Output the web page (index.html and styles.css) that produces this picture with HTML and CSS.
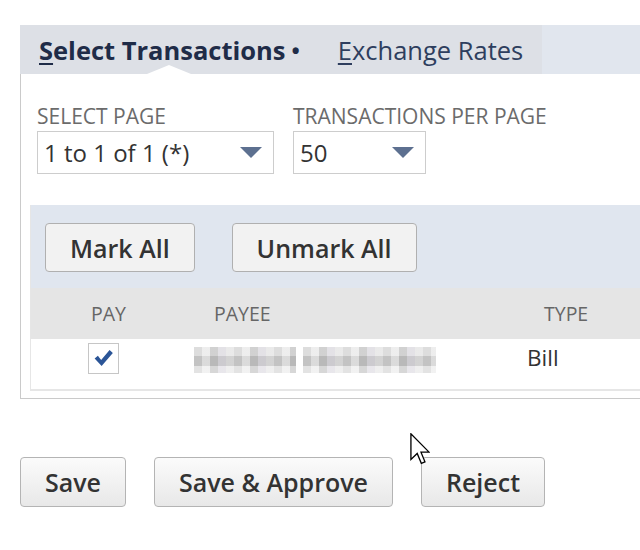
FILE: index.html
```html
<!DOCTYPE html>
<html>
<head>
<meta charset="utf-8">
<link rel="stylesheet" href="styles.css">
</head>
<body>
<div class="page">
  <div class="tabbar">
    <div class="tabs">
      <div class="tab active"><u>S</u>elect Transactions<span class="dot">•</span></div>
      <div class="tab"><u>E</u>xchange Rates</div>
    </div>
  </div>
  <div class="panel">
    <div class="fields">
      <div class="field f1">
        <div class="label">SELECT PAGE</div>
        <div class="select"><span class="value">1 to 1 of 1 (*)</span><span class="arrow"></span></div>
      </div>
      <div class="field f2">
        <div class="label">TRANSACTIONS PER PAGE</div>
        <div class="select"><span class="value">50</span><span class="arrow"></span></div>
      </div>
    </div>
    <div class="list">
      <div class="toolbar">
        <button class="btn">Mark All</button>
        <button class="btn">Unmark All</button>
      </div>
      <div class="grid head">
        <div class="c-pay">PAY</div>
        <div class="c-payee">PAYEE</div>
        <div class="c-type">TYPE</div>
      </div>
      <div class="grid row">
        <div class="c-pay">
          <span class="checkbox">
            <svg viewBox="0 0 31 31" width="29" height="29"><path d="M6 15.5 L9.5 12.5 L13 17 L22 6.5 L25.5 9.5 L13.5 23.5 Z" fill="#2b5597"/></svg>
          </span>
        </div>
        <div class="c-payee-d"><span class="blur w1"></span><span class="blur w2"></span></div>
        <div class="c-type-d">Bill</div>
      </div>
    </div>
  </div>
  <div class="actions">
    <button class="btn big">Save</button>
    <button class="btn big">Save &amp; Approve</button>
    <button class="btn big">Reject</button>
  </div>
  <svg class="cursor" viewBox="0 0 12 20" width="20" height="33"><path d="M0.5 0.5 L0.5 16 L4.3 12.4 L6.8 18.4 L9 17.5 L6.6 11.6 L11.5 11.6 Z" fill="#fff" stroke="#000" stroke-width="0.8" stroke-linejoin="miter"/></svg>
</div>
</body>
</html>
```
FILE: styles.css
```css
html, body {
  margin: 0;
  padding: 0;
  overflow: hidden;
  background: #fff;
}
body {
  font-family: "Open Sans", "Liberation Sans", sans-serif;
  color: #333;
}
.page {
  position: relative;
  width: 640px;
  height: 550px;
  overflow: hidden;
}
.tabbar {
  margin: 25px 0 0 20px;
  height: 49px;
  background: #e1e6ee;
  display: flex;
}
.tabs {
  display: flex;
  background: #dde0e6;
  height: 49px;
}
.tab {
  position: relative;
  padding: 0 19px;
  display: flex;
  align-items: center;
  font-size: 25.5px;
  color: #2e3e5e;
  white-space: nowrap;
}
.tab u {
  text-decoration-thickness: 2px;
  text-underline-offset: 3px;
}
.tab.active {
  font-weight: 700;
  color: #1f2c48;
}
.tab .dot {
  font-size: 22px;
  margin-left: 6px;
}
.tab.active::after {
  content: "";
  position: absolute;
  left: 50%;
  bottom: 0;
  margin-left: -22px;
  border-left: 22px solid transparent;
  border-right: 22px solid transparent;
  border-bottom: 9px solid #fff;
}
.panel {
  margin: 0 -60px 0 20px;
  border-left: 1px solid #cacaca;
  border-bottom: 1px solid #cacaca;
  padding: 30px 0 7px 9px;
}
.fields {
  display: flex;
  gap: 19px;
  padding-left: 7px;
  margin-bottom: 31px;
}
.f1 { width: 237px; }
.f2 { width: 133px; }
.label {
  font-size: 21px;
  line-height: 24px;
  color: #6b6b6b;
  white-space: nowrap;
}
.select {
  margin-top: 3px;
  height: 43px;
  box-sizing: border-box;
  border: 1px solid #cdcdcd;
  display: flex;
  align-items: center;
  justify-content: space-between;
  padding: 0 11px 0 6px;
  font-size: 24px;
  color: #333;
}
.arrow {
  width: 0;
  height: 0;
  border-left: 11px solid transparent;
  border-right: 11px solid transparent;
  border-top: 11px solid #5d7090;
}
.list {
  border-left: 1px solid #e6e6e6;
  border-bottom: 2px solid #e6e6e6;
}
.toolbar {
  background: #e0e6ef;
  padding: 18px 0 16px 14px;
  display: flex;
  gap: 37px;
}
.btn {
  font-family: "Open Sans", "Liberation Sans", sans-serif;
  font-size: 25px;
  font-weight: 600;
  color: #333;
  height: 49px;
  padding: 0 24px;
  border: 1px solid #b0b0b0;
  border-radius: 4px;
  background: #f2f2f2;
  white-space: nowrap;
}
.grid {
  display: grid;
  grid-template-columns: 155px 330px 1fr;
  align-items: center;
}
.head {
  height: 51px;
  background: #e5e5e5;
  font-size: 19.5px;
  color: #666;
}
.c-pay {
  text-align: center;
  display: flex;
  justify-content: center;
}
.c-payee { padding-left: 28px; }
.c-type { padding-left: 28px; }
.row {
  height: 50px;
  background: #fff;
  align-items: start;
}
.checkbox {
  width: 29px;
  height: 29px;
  border: 1px solid #c6c6c6;
  background: #fff;
  margin: 4px 10px 0 0;
  display: block;
}
.checkbox svg { display: block; }
.c-payee-d {
  padding: 8px 0 0 8px;
  display: flex;
  gap: 7px;
}
.blur {
  display: block;
  height: 26px;
  background:
    repeating-linear-gradient(to right, rgba(0,0,0,0.04) 0 8px, rgba(255,255,255,0.3) 8px 16px, rgba(0,0,0,0.09) 16px 24px, rgba(210,200,230,0.15) 24px 32px, rgba(255,255,255,0.15) 32px 40px),
    linear-gradient(to bottom, #e6e6e6 0 9px, #cbcbcb 9px 19px, #ececec 19px 26px);
}
.w1 { width: 102px; }
.w2 { width: 133px; }
.c-type-d {
  padding: 3px 0 0 11px;
  font-size: 22.5px;
  color: #333;
}
.actions {
  margin: 58px 0 0 20px;
  display: flex;
  gap: 28px;
}
.btn.big {
  height: 50px;
  background: linear-gradient(#fbfbfb, #e8e8e8);
  border-color: #b4b4b4;
}
.cursor {
  position: absolute;
  left: 410px;
  top: 433px;
}
```
